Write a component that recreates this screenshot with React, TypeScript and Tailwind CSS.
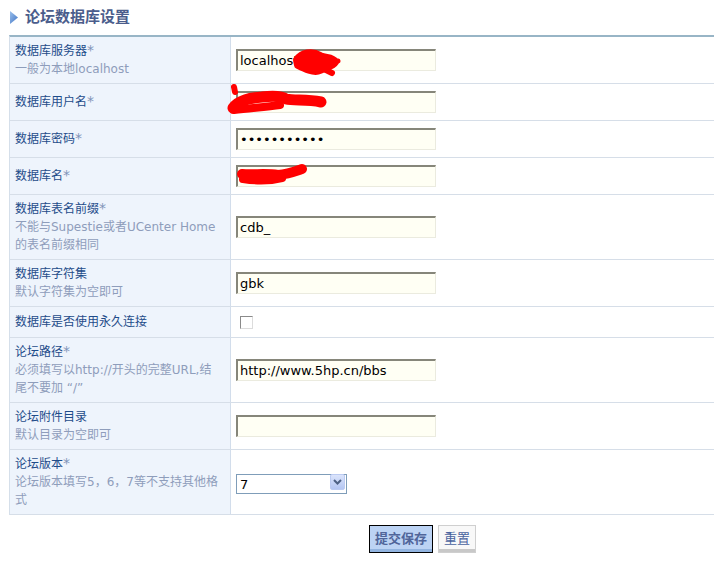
import React from 'react';

const font = { fontFamily: '"DejaVu Sans", "Noto Sans CJK SC", sans-serif' };

const inputClass =
  'h-[22px] w-[200px] border-t-2 border-l-2 border-r border-b border-t-[#86867a] border-l-[#86867a] border-r-[#ebebdf] border-b-[#ebebdf] bg-[#fffff4] px-[2px] text-[13px] text-black outline-none';

type Row = {
  label: string;
  required?: boolean;
  hint?: string[];
  h: string;
  field: React.ReactNode;
};

function TextField({ value, type = 'text', children }: { value: string; type?: string; children?: React.ReactNode }) {
  return (
    <div className="relative">
      <input type={type} defaultValue={value} className={inputClass} style={font} />
      {children}
    </div>
  );
}

function Scribble({ className, children }: { className: string; children: React.ReactNode }) {
  return (
    <svg className={`pointer-events-none absolute ${className}`} fill="none" stroke="#ff0000" strokeLinecap="round" strokeLinejoin="round">
      {children}
    </svg>
  );
}

function VersionSelect() {
  return (
    <div className="relative h-[20px] w-[111px]">
      <select
        defaultValue="7"
        className="h-[20px] w-[111px] appearance-none border border-[#7f9db9] bg-white pl-[3px] text-[13px] text-black outline-none"
        style={font}
      >
        <option value="5">5</option>
        <option value="6">6</option>
        <option value="7">7</option>
      </select>
      <span className="pointer-events-none absolute right-[2px] top-[2px] flex h-[16px] w-[15px] items-center justify-center rounded-[2px] border border-[#bccbf2] bg-gradient-to-b from-[#dbe4fb] to-[#b4c6f3]">
        <svg width="9" height="6" viewBox="0 0 9 6">
          <path d="M1 1 L4.5 4.5 L8 1" stroke="#4d6185" strokeWidth="2" fill="none" />
        </svg>
      </span>
    </div>
  );
}

const rows: Row[] = [
  {
    label: '数据库服务器',
    required: true,
    hint: ['一般为本地localhost'],
    h: 'h-[47px]',
    field: (
      <TextField value="localhost">
        <Scribble className="left-[52px] top-[0px] h-[30px] w-[56px]">
          <path d="M9 12 C14 5, 24 3, 32 8 C38 11, 44 9, 47 14 C44 19, 36 19, 32 22 C26 25, 16 20, 10 17 Z" fill="#ff0000" strokeWidth="8" />
          <path d="M34 20 L44 25" strokeWidth="6" />
          <path d="M44 14 L50 13" strokeWidth="5" />
        </Scribble>
      </TextField>
    ),
  },
  {
    label: '数据库用户名',
    required: true,
    h: 'h-[37px]',
    field: (
      <TextField value="">
        <Scribble className="left-[-10px] top-[-7px] h-[36px] w-[106px]">
          <path d="M8 4 L9 9" strokeWidth="6" />
          <path d="M7 25 C12 17, 24 15, 36 14 C44 13, 54 12, 60 16 C68 18, 80 16, 95 19" strokeWidth="11" />
          <path d="M8 27 C24 25, 40 24, 54 22" strokeWidth="8" />
        </Scribble>
      </TextField>
    ),
  },
  {
    label: '数据库密码',
    required: true,
    h: 'h-[37px]',
    field: <TextField type="password" value="xxxxxxxxxxx" />,
  },
  {
    label: '数据库名',
    required: true,
    h: 'h-[37px]',
    field: (
      <TextField value="">
        <Scribble className="left-[0px] top-[-1px] h-[26px] w-[72px]">
          <path d="M6 11 C18 12, 30 10, 42 12 C52 11, 60 8, 66 6" strokeWidth="10" />
          <path d="M7 16 C20 18, 34 18, 46 15" strokeWidth="8" />
        </Scribble>
      </TextField>
    ),
  },
  {
    label: '数据库表名前缀',
    required: true,
    hint: ['不能与Supestie或者UCenter Home', '的表名前缀相同'],
    h: 'h-[65px]',
    field: <TextField value="cdb_" />,
  },
  {
    label: '数据库字符集',
    hint: ['默认字符集为空即可'],
    h: 'h-[47px]',
    field: <TextField value="gbk" />,
  },
  {
    label: '数据库是否使用永久连接',
    h: 'h-[31px]',
    field: (
      <input
        type="checkbox"
        className="ml-[4px] h-[13px] w-[13px] appearance-none border border-t-[#8a8a8a] border-l-[#8a8a8a] border-r-[#dcdcdc] border-b-[#dcdcdc] bg-white"
      />
    ),
  },
  {
    label: '论坛路径',
    required: true,
    hint: ['必须填写以http://开头的完整URL,结', '尾不要加 “/”'],
    h: 'h-[65px]',
    field: <TextField value="http://www.5hp.cn/bbs" />,
  },
  {
    label: '论坛附件目录',
    hint: ['默认目录为空即可'],
    h: 'h-[47px]',
    field: <TextField value="" />,
  },
  {
    label: '论坛版本',
    required: true,
    hint: ['论坛版本填写5，6，7等不支持其他格', '式'],
    h: 'h-[65px]',
    field: <VersionSelect />,
  },
];

export default function App() {
  return (
    <div className="min-h-screen bg-white" style={font}>
      <div className="flex h-[35px] items-center gap-[7px] pl-[10px]">
        <svg width="8" height="13" viewBox="0 0 8 13">
          <defs>
            <linearGradient id="tri" x1="0" y1="0" x2="1" y2="1">
              <stop offset="0" stopColor="#9cc0ec" />
              <stop offset="1" stopColor="#3f74c4" />
            </linearGradient>
          </defs>
          <path d="M0 0 L8 6.5 L0 13 Z" fill="url(#tri)" />
        </svg>
        <h1 className="text-[15px] font-bold text-[#4b5d8c]">论坛数据库设置</h1>
      </div>

      <div className="ml-[9px] border-l border-t-2 border-l-[#d5dfea] border-t-[#98b5c6]">
        {rows.map((row) => (
          <div key={row.label} className={`flex border-b border-[#d6dee8] ${row.h}`}>
            <div className="flex w-[221px] shrink-0 flex-col justify-center border-r border-[#d2ddeb] bg-[#eef4fc] pl-[5px] text-[12px] leading-[18px]">
              <span className="whitespace-nowrap text-[#1e4c8a]">
                {row.label}
                {row.required ? <span className="text-[14px] leading-[12px] text-[#7f93b8]">*</span> : null}
              </span>
              {row.hint?.map((line) => (
                <span key={line} className="whitespace-nowrap text-[#8e9dbb]">
                  {line}
                </span>
              ))}
            </div>
            <div className="flex flex-1 items-center pl-[5px]">{row.field}</div>
          </div>
        ))}
      </div>

      <div className="mt-[10px] flex gap-[5px] pl-[369px]">
        <button
          type="button"
          className="h-[28px] w-[64px] border border-black bg-[#bcd3f4] text-[13px] font-bold text-[#50659a] shadow-[inset_0_-3px_0_#92b4e0]"
        >
          提交保存
        </button>
        <button
          type="button"
          className="h-[28px] w-[38px] border border-[#cfcfcf] bg-[#f8f8f8] text-[13px] text-[#4a64a0] shadow-[inset_0_-3px_0_#c8c8c8]"
        >
          重置
        </button>
      </div>
    </div>
  );
}
